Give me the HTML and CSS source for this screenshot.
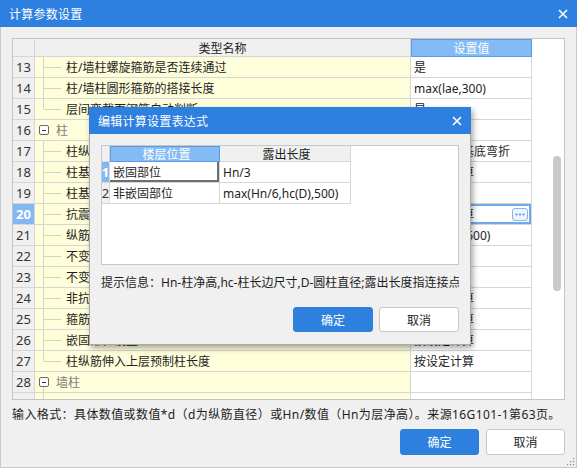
FILE: index.html
```html
<!DOCTYPE html>
<html lang="zh-CN">
<head>
  <meta charset="UTF-8">
  <title>计算参数设置</title>
  <link rel="stylesheet" href="styles.css">
</head>
<body>
  <div class="window">
    <div class="titlebar">
      <span class="title">计算参数设置</span>
      <svg class="close" width="10" height="10" viewBox="0 0 10 10"><path d="M1 1L9 9M9 1L1 9" stroke="#fff" stroke-width="1.6"/></svg>
    </div>
    <div class="content">
      <div class="grid-frame">
        <div class="grid">
          <div class="row head">
            <div class="cell no"></div>
            <div class="cell name-h">类型名称</div>
            <div class="cell val-h">设置值</div>
          </div>
          <div class="row"><div class="cell no">13</div><div class="cell name leaf">柱/墙柱螺旋箍筋是否连续通过</div><div class="cell val">是</div></div>
          <div class="row"><div class="cell no">14</div><div class="cell name leaf">柱/墙柱圆形箍筋的搭接长度</div><div class="cell val">max(lae,300)</div></div>
          <div class="row"><div class="cell no">15</div><div class="cell name leaf last">层间变截面钢筋自动判断</div><div class="cell val">是</div></div>
          <div class="row"><div class="cell no">16</div><div class="cell name group"><span class="fold"></span>柱</div><div class="cell val"></div></div>
          <div class="row"><div class="cell no">17</div><div class="cell name leaf">柱纵筋伸入基础锚固形式</div><div class="cell val">全部伸入基底弯折</div></div>
          <div class="row"><div class="cell no">18</div><div class="cell name leaf">柱基础插筋弯折长度</div><div class="cell val">按规范计算</div></div>
          <div class="row"><div class="cell no">19</div><div class="cell name leaf">柱基础锚固区只计算外侧箍筋</div><div class="cell val">是</div></div>
          <div class="row"><div class="cell no selected">20</div><div class="cell name leaf">抗震柱纵筋露出长度</div><div class="cell val editing">按规范计算<span class="more"><svg width="10" height="3" viewBox="0 0 10 3"><circle cx="1.5" cy="1.5" r="1" fill="#4a8ad8"/><circle cx="5" cy="1.5" r="1" fill="#4a8ad8"/><circle cx="8.5" cy="1.5" r="1" fill="#4a8ad8"/></svg></span></div></div>
          <div class="row"><div class="cell no">21</div><div class="cell name leaf">纵筋搭接接头错开长度</div><div class="cell val">max(35d,500)</div></div>
          <div class="row"><div class="cell no">22</div><div class="cell name leaf">不变截面上柱多出的钢筋锚固</div><div class="cell val">1.2*lae</div></div>
          <div class="row"><div class="cell no">23</div><div class="cell name leaf">不变截面下柱多出的钢筋锚固</div><div class="cell val">1.2*lae</div></div>
          <div class="row"><div class="cell no">24</div><div class="cell name leaf">非抗震柱纵筋露出长度</div><div class="cell val">按规范计算</div></div>
          <div class="row"><div class="cell no">25</div><div class="cell name leaf">箍筋加密区设置</div><div class="cell val">按规范计算</div></div>
          <div class="row"><div class="cell no">26</div><div class="cell name leaf">嵌固部位设置</div><div class="cell val">按设定计算</div></div>
          <div class="row"><div class="cell no">27</div><div class="cell name leaf last">柱纵筋伸入上层预制柱长度</div><div class="cell val">按设定计算</div></div>
          <div class="row"><div class="cell no">28</div><div class="cell name group open"><span class="fold"></span>墙柱</div><div class="cell val"></div></div>
          <div class="row"><div class="cell no"></div><div class="cell name leaf"></div><div class="cell val"></div></div>
        </div>
        <div class="scroll-col"><div class="thumb"></div></div>
      </div>
      <div class="hint">输入格式：具体数值或数值*d（d为纵筋直径）或Hn/数值（Hn为层净高）。来源16G101-1第63页。</div>
      <div class="actions">
        <button class="btn primary">确定</button>
        <button class="btn">取消</button>
      </div>
    </div>
    <svg class="grip" width="10" height="10" viewBox="0 0 10 10">
      <rect x="8" y="2" width="1.2" height="1.2" fill="#888"/>
      <rect x="5" y="5" width="1.2" height="1.2" fill="#888"/>
      <rect x="8" y="5" width="1.2" height="1.2" fill="#888"/>
      <rect x="2" y="8" width="1.2" height="1.2" fill="#888"/>
      <rect x="5" y="8" width="1.2" height="1.2" fill="#888"/>
      <rect x="8" y="8" width="1.2" height="1.2" fill="#888"/>
    </svg>
  </div>

  <div class="dialog">
    <div class="titlebar small">
      <span class="title">编辑计算设置表达式</span>
      <svg class="close" width="10" height="10" viewBox="0 0 10 10"><path d="M1 1L9 9M9 1L1 9" stroke="#fff" stroke-width="1.6"/></svg>
    </div>
    <div class="dlg-body">
      <div class="expr-frame">
        <div class="erow ehead">
          <div class="ecell eno"></div>
          <div class="ecell floor-h">楼层位置</div>
          <div class="ecell len-h">露出长度</div>
        </div>
        <div class="erow">
          <div class="ecell eno sel">1</div>
          <div class="ecell floor focus">嵌固部位</div>
          <div class="ecell len">Hn/3</div>
        </div>
        <div class="erow">
          <div class="ecell eno">2</div>
          <div class="ecell floor">非嵌固部位</div>
          <div class="ecell len">max(Hn/6,hc(D),500)</div>
        </div>
      </div>
      <div class="dlg-hint">提示信息：Hn-柱净高,hc-柱长边尺寸,D-圆柱直径;露出长度指连接点</div>
      <div class="actions dlg-actions">
        <button class="btn primary">确定</button>
        <button class="btn">取消</button>
      </div>
    </div>
  </div>
</body>
</html>
```

FILE: styles.css
```css
* {
  box-sizing: border-box;
}
body {
  margin: 0;
  width: 577px;
  height: 468px;
  overflow: hidden;
  font-family: 'Noto Sans', 'Noto Sans CJK SC', sans-serif;
  font-size: 12px;
  color: #1e1e1e;
  background: #f0f0f0;
  position: relative;
}
.window {
  width: 577px;
  height: 468px;
  display: flex;
  flex-direction: column;
  position: relative;
}
.titlebar {
  height: 27px;
  flex: none;
  background: #2d7fe0;
  color: #fff;
  display: flex;
  align-items: center;
  justify-content: space-between;
  padding: 0 9px 0 9px;
}
.titlebar .title {
  font-size: 12px;
  letter-spacing: 0.02em;
}
.content {
  flex: 1;
  border: 1px solid #c9c9c9;
  border-top: none;
  padding: 11px 11px 11px 11px;
  display: flex;
  flex-direction: column;
}
.grid-frame {
  height: 362px;
  border: 1px solid #c4c4c4;
  background: #fff;
  display: flex;
  overflow: hidden;
}
.grid {
  width: 519px;
  flex: none;
}
.row {
  display: grid;
  grid-template-columns: 22px 376px 121px;
  height: 21px;
}
.row.head {
  height: 18px;
}
.cell {
  border-right: 1px solid #d6d6d6;
  border-bottom: 1px solid #d6d6d6;
  display: flex;
  align-items: center;
  white-space: nowrap;
  overflow: hidden;
  position: relative;
}
.cell.no {
  background: #f0f0f0;
  justify-content: center;
  font-size: 13px;
  color: #333;
}
.cell.no.selected {
  background: #82b9f4;
  color: #fff;
  font-weight: bold;
}
.name-h {
  background: #f0f0f0;
  justify-content: center;
}
.val-h {
  background: #84bbf5;
  border: 1px solid #5c9ce6;
  color: #fff;
  justify-content: center;
}
.name {
  background: #fffedb;
}
.leaf {
  padding-left: 31px;
}
.leaf::before {
  content: '';
  position: absolute;
  left: 8px;
  top: 0;
  bottom: 0;
  border-left: 1px solid #d4d4c4;
}
.leaf.last::before {
  bottom: 50%;
}
.leaf::after {
  content: '';
  position: absolute;
  left: 9px;
  width: 17px;
  top: 50%;
  border-top: 1px solid #d4d4c4;
}
.group {
  padding-left: 4px;
  color: #808080;
}
.group.open::before {
  content: '';
  position: absolute;
  left: 8px;
  top: 15px;
  bottom: 0;
  border-left: 1px solid #d4d4c4;
}
.fold {
  width: 10px;
  height: 10px;
  border: 1px solid #6a6a6a;
  border-radius: 2px;
  margin-right: 7px;
  position: relative;
  background: #fff;
}
.fold::after {
  content: '';
  position: absolute;
  left: 2px;
  right: 2px;
  top: 3.5px;
  border-top: 1px solid #333;
}
.val {
  padding-left: 3px;
}
.val.editing {
  box-shadow: inset 0 0 0 2px #70a9ee;
}
.more {
  margin-left: auto;
  margin-right: 3px;
  width: 16px;
  height: 13px;
  border: 1px solid #86b3ea;
  border-radius: 3px;
  background: #edf4fd;
  display: flex;
  align-items: center;
  justify-content: center;
}
.scroll-col {
  flex: 1;
  background: #fff;
  padding: 117px 0 0 21px;
}
.thumb {
  width: 8px;
  height: 135px;
  border-radius: 4px;
  background: #c9c9c9;
}
.hint {
  margin-top: 6px;
  line-height: 18px;
  white-space: nowrap;
  letter-spacing: 0.4px;
}
.actions {
  display: flex;
  justify-content: flex-end;
  gap: 7px;
  margin-top: 5px;
}
.btn {
  width: 79px;
  height: 26px;
  border: 1px solid #c8c8c8;
  border-radius: 3px;
  background: #fff;
  font-family: inherit;
  font-size: 12px;
  color: #1e1e1e;
  padding: 0;
}
.btn.primary {
  background: #2e80df;
  border-color: #2e80df;
  color: #fff;
}
.grip {
  position: absolute;
  right: 2px;
  bottom: 2px;
}

/* 表达式弹窗 */
.dialog {
  position: absolute;
  left: 89px;
  top: 107px;
  width: 382px;
  height: 238px;
  background: #f0f0f0;
  border: 1px solid #a9a9a9;
  border-top: none;
  box-shadow: 2px 3px 6px rgba(0, 0, 0, 0.35);
  display: flex;
  flex-direction: column;
}
.titlebar.small {
  margin: 0 -1px;
  padding: 0 9px 0 9px;
}
.dlg-body {
  padding: 11px 11px 0 11px;
  display: flex;
  flex-direction: column;
}
.expr-frame {
  height: 120px;
  border: 1px solid #c8c8c8;
  background: #fff;
}
.erow {
  display: grid;
  grid-template-columns: 8px 110px 131px;
  height: 21px;
}
.erow.ehead {
  height: 16px;
}
.ecell {
  border-right: 1px solid #d6d6d6;
  border-bottom: 1px solid #d6d6d6;
  display: flex;
  align-items: center;
  white-space: nowrap;
  overflow: hidden;
  padding-left: 3px;
}
.ecell.eno {
  background: #f0f0f0;
  padding-left: 0;
  justify-content: center;
  font-size: 13px;
  color: #333;
}
.ecell.eno.sel {
  background: #82b9f4;
  color: #fff;
  font-weight: bold;
}
.floor-h {
  background: #84bbf5;
  border: 1px solid #5c9ce6;
  color: #fff;
  justify-content: center;
}
.len-h {
  background: #f0f0f0;
  justify-content: center;
}
.floor.focus {
  box-shadow: inset -2px -2px 0 #6e6e6e;
}
.dlg-hint {
  margin-top: 9px;
  line-height: 18px;
  white-space: nowrap;
  overflow: hidden;
  width: 358px;
}
.dlg-actions {
  margin-top: 15px;
  gap: 6px;
}
.dlg-actions .btn {
  width: 80px;
  height: 25px;
}
```
